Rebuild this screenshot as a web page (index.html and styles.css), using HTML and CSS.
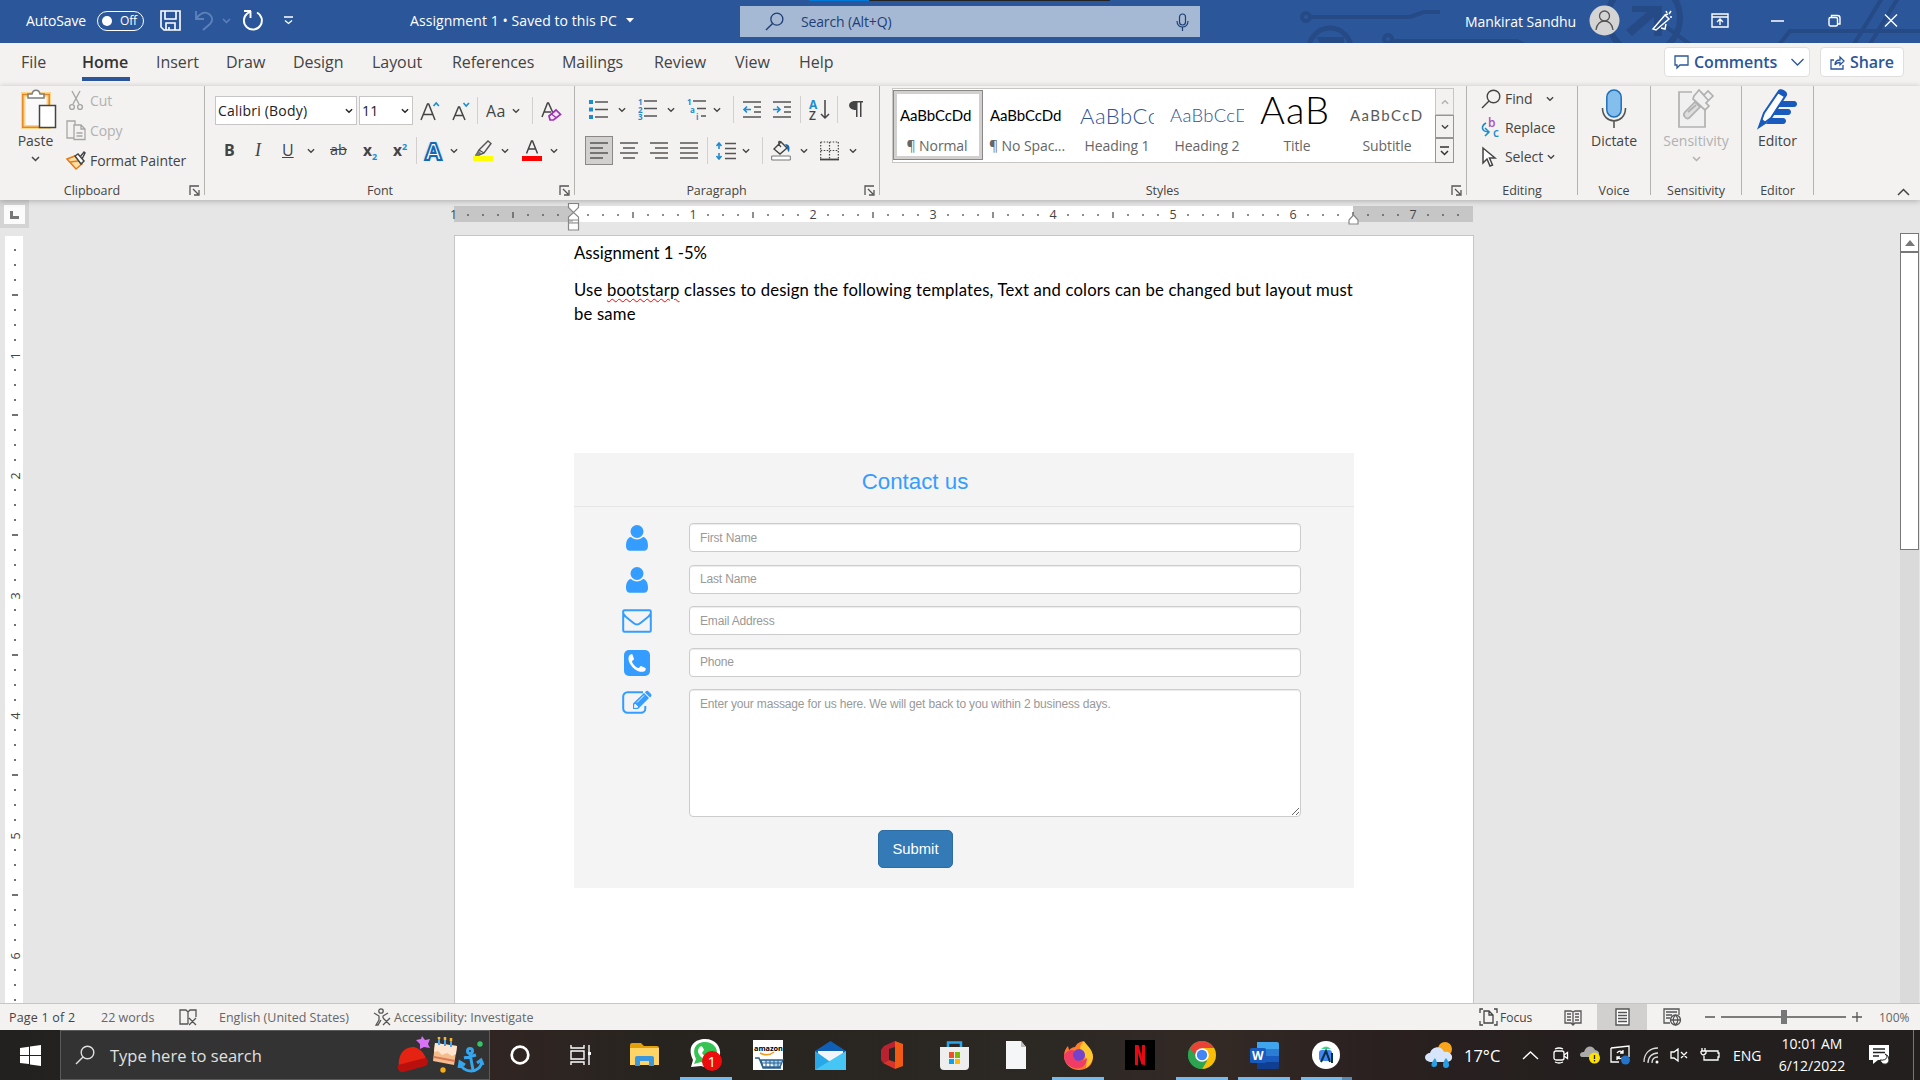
FILE: index.html
```html
<!DOCTYPE html>
<html lang="en">
<head>
    <meta charset="UTF-8">
    <meta name="viewport" content="width=device-width, initial-scale=1.0">
    <title>Assignment 1 - Word</title>
    <link rel="stylesheet" href="styles.css">
</head>
<body>
    <!-- shared icons -->
    <svg class="defs" width="0" height="0">
        <symbol id="chev" viewBox="0 0 9 6"><path d="M1 1l3.500 3.500L8 1" fill="none" stroke="currentColor" stroke-width="1.500"/></symbol>
        <symbol id="launch" viewBox="0 0 11 11"><path d="M1 10V1h9M4 4l5 5M10 5v5H5" fill="none" stroke="#555" stroke-width="1.300"/></symbol>
        <symbol id="glass" viewBox="0 0 20 20"><circle cx="12.500" cy="7.500" r="6.300" fill="none" stroke="currentColor" stroke-width="1.400"/><path d="M8 12L1 19" stroke="currentColor" stroke-width="1.500"/></symbol>
        <symbol id="user" viewBox="0 0 22 26"><circle cx="11" cy="6.500" r="6.500"/><path d="M5 12c1.500 1.500 3.500 2.400 6 2.400S15.500 13.500 17 12c3.500.5 5 4.500 5 9 0 3-1.500 4.800-4 4.800H4c-2.500 0-4-1.800-4-4.800 0-4.500 1.500-8.500 5-9z"/></symbol>
    </svg>

    <header class="titlebar">
        <svg class="circuit" width="660" height="43" fill="none" stroke="#254a85" stroke-width="4">
            <circle cx="46" cy="17" r="4"/><path d="M50 17h100l14-5h16M132 41h125l8 4M405 26l30 22M518 46l12-15h130M594 44l28-46M610 44l28-46"/>
            <circle cx="70" cy="49" r="21" stroke-width="5"/><path d="M62 43h20v-4H60z" fill="#254a85"/>
            <circle cx="128" cy="39" r="4"/><circle cx="384" cy="18" r="36" stroke-width="6"/>
            <path d="M372 6h30v30h-8V17l-22 19-6-6 21-18h-15z" fill="#254a85" stroke="none"/>
        </svg>
        <span>AutoSave</span>
        <span class="toggle"><i></i>Off</span>
        <svg width="21" height="21" fill="none" stroke="#fff" stroke-width="1.600"><path d="M1 1h19v19H4l-3-3zM5 1v8h11V1M6 20v-7h9v7M9 20v-3"/></svg>
        <svg width="19" height="21" fill="none" stroke="#5d82bb" stroke-width="1.800"><path d="M1 1v8h8M1 9c4-6 9-8 13-5s4 7 1 10l-7 6"/></svg>
        <svg class="dim" width="9" height="6"><use href="#chev"/></svg>
        <svg width="22" height="21" fill="none" stroke="#fff" stroke-width="1.900"><path d="M9 1H2v0M8.500 1v7M15 2.500a9 9 0 1 1-10 1.200L8 1.500"/></svg>
        <svg width="9" height="9" fill="none" stroke="#fff" stroke-width="1.300"><path d="M0 1h9M1 4.500l3.500 3 3.500-3"/></svg>
        <span class="doc-title">Assignment 1 • Saved to this PC</span>
        <svg width="8" height="5" fill="#fff"><path d="M0 0h8L4 4.500z"/></svg>
        <div class="search">
            <svg width="19" height="19"><use href="#glass"/></svg>
            <span>Search (Alt+Q)</span>
            <svg width="13" height="18" fill="none" stroke="#1e3f75" stroke-width="1.200"><rect x="3.500" y="1" width="6" height="11" rx="3"/><path d="M1 8c0 8 11 8 11 0M6.500 14v4"/></svg>
        </div>
        <span class="account">Mankirat Sandhu</span>
        <svg width="31" height="31"><circle cx="15.500" cy="15.500" r="15" fill="#d4d4d4"/><g fill="none" stroke="#555" stroke-width="1.300"><circle cx="15.500" cy="11" r="5"/><path d="M7 25c1-12 16-12 17 0"/></g></svg>
        <svg width="21" height="22" fill="none" stroke="#fff" stroke-width="1.500"><path d="M1 19L13 5l4 4L4 20zM13 5l3-1M9 18l4 1 1-5M14 1l1 2M19 1l-2 3M20 7h-2"/></svg>
        <svg width="18" height="15" fill="none" stroke="#fff" stroke-width="1.400"><path d="M1 1h16v13H1zM1 4h16M9 12V6M6 9l3-3 3 3"/></svg>
        <svg width="13" height="2"><path d="M0 1h13" stroke="#fff" stroke-width="1.500"/></svg>
        <svg width="13" height="13" fill="none" stroke="#fff" stroke-width="1.400"><rect x="1" y="3.500" width="8.500" height="8.500" rx="1.500"/><path d="M3.500 3V1.500h6c2 0 2.500 1 2.500 2.500v6h-2"/></svg>
        <svg width="14" height="13" fill="none" stroke="#fff" stroke-width="1.400"><path d="M1 .5l12 12M13 .5l-12 12"/></svg>
        <div class="top-strip"></div>
    </header>

    <nav class="tabs">
        <span>File</span><span class="active">Home</span><span>Insert</span><span>Draw</span><span>Design</span><span>Layout</span><span>References</span><span>Mailings</span><span>Review</span><span>View</span><span>Help</span>
        <div class="pill comments"><svg width="15" height="14" fill="none" stroke="#2b579a" stroke-width="1.300"><path d="M1 1h13v9H6l-3 3v-3H1z"/></svg>Comments<svg class="pill-chev" width="13" height="8" fill="none" stroke="#2b579a" stroke-width="1.300"><path d="M.5 1l6 6 6-6"/></svg></div>
        <div class="pill"><svg width="15" height="15" fill="none" stroke="#2b579a" stroke-width="1.300"><path d="M4 5H1v9h12v-4M5 10c0-4 2-5 5-5V2l4 4-4 4V7.500c-3 0-4 .5-5 2.500z"/></svg>Share</div>
    </nav>

    <section class="ribbon">
        <div class="group clipboard">
            <div class="group-body">
                <div class="big-btn paste">
                    <svg width="35" height="40" fill="none"><path d="M2 6h24v31H2z" fill="#fafafa" stroke="#fbd78b" stroke-width="6"/><path d="M.8 5.500h26.400v32.700H.8z" stroke="#e58527" stroke-width="1.500"/><path d="M3.500 8h21v28h-21z" fill="#fafafa"/><path d="M6 9V5h4c1-5 7-5 8 0h4v4z" fill="#fff" stroke="#7d7d7d" stroke-width="1.500"/><path d="M17.500 16.500h16v22h-16z" fill="#fff" stroke="#444" stroke-width="1.500"/></svg>
                    <span>Paste</span>
                    <svg width="9" height="6"><use href="#chev"/></svg>
                </div>
                <div class="small-btns">
                    <div class="off"><svg width="20" height="20" fill="none" stroke="#a6a6a6" stroke-width="1.400"><path d="M6 1l7 13M14 1L7 14"/><circle cx="6" cy="17" r="2.400"/><circle cx="14" cy="17" r="2.400"/></svg>Cut</div>
                    <div class="off"><svg width="20" height="20" fill="#f3f2f1" stroke="#a6a6a6" stroke-width="1.300"><path d="M1 1h8v17H1z"/><path d="M8 5h7l4 4v10.500H8zM15 5v4h4M10.500 13h6M10.500 16h6"/></svg>Copy</div>
                    <div><svg width="20" height="20" fill="none" stroke="#e57a17" stroke-width="1.500"><path d="M1 9l8-3 7 8-6 5zM4 12l8-1" fill="#ffe0a3"/><path d="M9 6l3-2 6 7-3 3zM14 7l4-5 1 1-3 6" stroke="#444" fill="#fff"/></svg>Format Painter</div>
                </div>
            </div>
            <div class="group-label"><span>Clipboard</span></div>
            <svg class="launcher" width="11" height="11"><use href="#launch"/></svg>
        </div>

        <div class="group font">
            <div class="group-body">
                <div class="tool-row font-top">
                    <div class="combo">Calibri (Body)<svg width="8" height="6"><use href="#chev"/></svg></div>
                    <div class="combo">11<svg width="8" height="6"><use href="#chev"/></svg></div>
                    <svg width="22" height="22"><path d="M1 20L7.500 4h1.200L15 20M3.500 14.500h9" fill="none" stroke="#444" stroke-width="1.500"/><path d="M13.500 6l2.700-3 2.700 3" fill="none" stroke="#1e8bcd" stroke-width="1.600"/></svg>
                    <svg width="20" height="22"><path d="M1 20L6.500 7h1L13 20M3 15.500h8" fill="none" stroke="#444" stroke-width="1.500"/><path d="M11.500 3l2.700 3L17 3" fill="none" stroke="#1e8bcd" stroke-width="1.600"/></svg>
                    <i class="sep"></i>
                    <span class="case">Aa</span>
                    <svg width="8" height="6"><use href="#chev"/></svg>
                    <i class="sep"></i>
                    <svg width="22" height="22" fill="none"><path d="M1 17L6.500 3h1L12 13M3 12h7" stroke="#444" stroke-width="1.500"/><path d="M8 16l7-6 4.500 4.500-7 5.500H9z" fill="#f7e6fa" stroke="#a033b3" stroke-width="1.700"/><path d="M10.500 14l5 4" stroke="#a033b3" stroke-width="1.500"/></svg>
                </div>
                <div class="tool-row font-bottom">
                    <b class="letter">B</b>
                    <em class="letter serif">I</em>
                    <u class="letter">U</u>
                    <svg width="8" height="6"><use href="#chev"/></svg>
                    <s class="letter strike">ab</s>
                    <span class="letter script">x<sub>2</sub></span>
                    <span class="letter script">x<sup>2</sup></span>
                    <i class="sep"></i>
                    <span class="effect">A</span>
                    <svg width="8" height="6"><use href="#chev"/></svg>
                    <svg width="20" height="22" fill="none"><path d="M0 16h20v5H0z" fill="#ff0"/><path d="M3 15l3-5 9-9 3 2.500-7 9.500-5 2zM6 10l5 3" stroke="#555" stroke-width="1.400"/><path d="M2 15l4-4 3 3z" fill="#777"/></svg>
                    <svg width="8" height="6"><use href="#chev"/></svg>
                    <svg width="20" height="22"><path d="M0 16h20v5H0z" fill="#f00"/><path d="M4.500 13.500L9.500 1h1l5 12.500M6.500 9h7" fill="none" stroke="#444" stroke-width="1.500"/></svg>
                    <svg width="8" height="6"><use href="#chev"/></svg>
                </div>
            </div>
            <div class="group-label"><span>Font</span></div>
            <svg class="launcher" width="11" height="11"><use href="#launch"/></svg>
        </div>

        <div class="group paragraph">
            <div class="group-body">
                <div class="tool-row para-top">
                    <svg width="19" height="20"><path d="M0 0h4v4H0zM0 7.500h4v4H0zM0 15h4v4H0z" fill="#1e8bcd"/><path d="M6 2h13M6 9.500h13M6 17h13" stroke="#555" stroke-width="1.500"/></svg>
                    <svg width="8" height="6"><use href="#chev"/></svg>
                    <svg width="19" height="21"><text class="num" x="0" y="6">1</text><text class="num" x="0" y="13.500">2</text><text class="num" x="0" y="21">3</text><path d="M6 2h13M6 9.500h13M6 17h13" stroke="#555" stroke-width="1.500"/></svg>
                    <svg width="8" height="6"><use href="#chev"/></svg>
                    <svg width="19" height="21"><text class="num" x="0" y="6">1</text><text class="num" x="3" y="13.500">a</text><text class="num" x="9" y="21">i</text><path d="M6 2h13M10 9.500h9M14 17h5" stroke="#555" stroke-width="1.500"/></svg>
                    <svg width="8" height="6"><use href="#chev"/></svg>
                    <i class="sep"></i>
                    <svg width="18" height="20"><path d="M0 2h18M11 7h7M11 12h7M0 17h18" stroke="#555" stroke-width="1.500"/><path d="M8 9.500H1M4 6.500l-3 3 3 3" fill="none" stroke="#1e8bcd" stroke-width="1.600"/></svg>
                    <svg width="18" height="20"><path d="M0 2h18M11 7h7M11 12h7M0 17h18" stroke="#555" stroke-width="1.500"/><path d="M0 9.500h7M4 6.500l3 3-3 3" fill="none" stroke="#1e8bcd" stroke-width="1.600"/></svg>
                    <i class="sep"></i>
                    <svg width="21" height="22"><text class="sort-a" x="0" y="10">A</text><text class="sort-z" x="0" y="21">Z</text><path d="M16 1v18M12 15l4 4 4-4" fill="none" stroke="#444" stroke-width="1.500"/></svg>
                    <i class="sep"></i>
                    <svg width="14" height="17"><path d="M6 0h8v1.500h-1.500V16H11V1.500H8.500V16H7V9C-2 9-2 0 6 0z" fill="#444"/></svg>
                </div>
                <div class="tool-row para-bottom">
                    <div class="pressed"><svg width="18" height="17"><path d="M0 1h18M0 6h13M0 11h18M0 16h13" stroke="#555" stroke-width="1.500"/></svg></div>
                    <svg width="18" height="17"><path d="M0 1h18M3 6h12M0 11h18M3 16h12" stroke="#555" stroke-width="1.500"/></svg>
                    <svg width="18" height="17"><path d="M0 1h18M5 6h13M0 11h18M5 16h13" stroke="#555" stroke-width="1.500"/></svg>
                    <svg width="18" height="17"><path d="M0 1h18M0 6h18M0 11h18M0 16h18" stroke="#555" stroke-width="1.500"/></svg>
                    <i class="sep"></i>
                    <svg width="20" height="18"><path d="M9 1.500h11M9 6.500h11M9 11.500h11M9 16.500h11" stroke="#555" stroke-width="1.500"/><path d="M3 1v6M.5 4L3 1l2.500 3M3 11v6M.5 14L3 17l2.500-3" fill="none" stroke="#1e8bcd" stroke-width="1.600"/></svg>
                    <svg width="8" height="6"><use href="#chev"/></svg>
                    <i class="sep"></i>
                    <svg width="20" height="22" fill="none"><path d="M.7 16h18.600v4H.7z" fill="#fff" stroke="#777"/><path d="M3 9l7-7 6 6-7 6zM10 2c-3-2-3 2 0 5" stroke="#444" stroke-width="1.400"/><path d="M14 4c5 0 5 4 4 8-2-1-1-4-4-8z" fill="#1468b3"/></svg>
                    <svg width="8" height="6"><use href="#chev"/></svg>
                    <svg width="19" height="20" fill="none"><path d="M.7 1h17.600M.7 9.500h17.600M.7 1v17M9.500 1v17M18.300 1v17" stroke="#444" stroke-width="1.200" stroke-dasharray="1.500 1.500"/><path d="M0 18.500h19" stroke="#444" stroke-width="1.800"/></svg>
                    <svg width="8" height="6"><use href="#chev"/></svg>
                </div>
            </div>
            <div class="group-label"><span>Paragraph</span></div>
            <svg class="launcher" width="11" height="11"><use href="#launch"/></svg>
        </div>

        <div class="group styles">
            <div class="group-body">
                <div class="gallery">
                    <div class="style-item chosen"><p class="normal">AaBbCcDd</p><small>¶ Normal</small></div>
                    <div class="style-item"><p class="normal">AaBbCcDd</p><small>¶ No Spac...</small></div>
                    <div class="style-item"><p class="heading1">AaBbCc</p><small>Heading 1</small></div>
                    <div class="style-item"><p class="heading2">AaBbCcD</p><small>Heading 2</small></div>
                    <div class="style-item"><p class="title">AaB</p><small>Title</small></div>
                    <div class="style-item"><p class="subtitle">AaBbCcD</p><small>Subtitle</small></div>
                    <div class="gallery-scroll">
                        <span class="disabled"><svg class="flip" width="8" height="6"><use href="#chev"/></svg></span>
                        <span><svg width="8" height="6"><use href="#chev"/></svg></span>
                        <span><svg width="9" height="10" fill="none" stroke="#333" stroke-width="1.500"><path d="M0 1h9M1 5l3.500 3.500L8 5"/></svg></span>
                    </div>
                </div>
            </div>
            <div class="group-label"><span>Styles</span></div>
            <svg class="launcher" width="11" height="11"><use href="#launch"/></svg>
        </div>

        <div class="group editing">
            <div class="group-body edit-list">
                <div><svg width="20" height="20"><use href="#glass"/></svg>Find<svg class="gap" width="8" height="6"><use href="#chev"/></svg></div>
                <div><svg width="20" height="22" fill="none"><text class="rep-b" x="7" y="10">b</text><text class="rep-c" x="12" y="20">c</text><path d="M5 6C0 9 0 14 7 15M4 11l4 4-4 4" stroke="#1e8bcd" stroke-width="1.600"/></svg>Replace</div>
                <div><svg width="20" height="20" fill="#fff" stroke="#444" stroke-width="1.500"><path d="M2 1v15l4-4 3 7 2.500-1-3-7H14z"/></svg>Select<svg width="8" height="6"><use href="#chev"/></svg></div>
            </div>
            <div class="group-label"><span>Editing</span></div>
        </div>

        <div class="group voice">
            <div class="group-body big-btn">
                <svg width="26" height="40" fill="none"><rect x="5.800" y="1" width="14.400" height="27" rx="7.200" fill="#83beec" stroke="#1e6fba" stroke-width="1.500"/><path d="M1.500 19c0 17 23 17 23 0M13 32v7" stroke="#555" stroke-width="1.600"/></svg>
                <span>Dictate</span>
            </div>
            <div class="group-label"><span>Voice</span></div>
        </div>

        <div class="group sensitivity">
            <div class="group-body big-btn off">
                <svg width="36" height="40" fill="none" stroke="#b1b1b1" stroke-width="1.700"><path d="M14 3H1v35h26V18" fill="#f0f0f0"/><path d="M7 23l10-10 5 5-11 11c-3 2-7-3-4-6zM10 23l8-7" fill="#ddd"/><path d="M16 7l5-6 5 5 4-4 5 5-7 7 3 3-4 4L15 10zM21 1l9 10" fill="#f0f0f0"/></svg>
                <span>Sensitivity</span>
                <svg width="9" height="6"><use href="#chev"/></svg>
            </div>
            <div class="group-label"><span>Sensitivity</span></div>
        </div>

        <div class="group editor">
            <div class="group-body big-btn">
                <svg width="40" height="40" fill="#185abd"><path d="M19 12h17c4 0 4 6 0 6H18zM15 20h15c4 0 4 6 0 6H13zM12 29h13c4 0 4 6 0 6H8z"/><path d="M1 38l5-14L21 2c2-2 8 1 7 4L13 29z" fill="#fff" stroke="#185abd" stroke-width="2"/><path d="M21 1c3-1 8 2 7 5l-2 2-7-4zM1 39l3-9 5 4z"/></svg>
                <span>Editor</span>
            </div>
            <div class="group-label"><span>Editor</span></div>
        </div>
        <svg class="collapse" width="13" height="8" fill="none" stroke="#444" stroke-width="1.500"><path d="M1 7l5.500-5.500L12 7"/></svg>
    </section>

    <main class="workspace">
        <aside class="left-rail">
            <div class="tab-stop"><svg width="10" height="8"><path d="M0 0h3v5h6v3H0z" fill="#777"/></svg></div>
            <svg class="v-ruler" width="18" height="768">
                <defs><pattern id="vt" y="-1" width="18" height="120" patternUnits="userSpaceOnUse"><path d="M9 15h2M9 30h2M9 45h2M7 60h6M9 75h2M9 90h2M9 105h2" stroke="#444" stroke-width="1.300"/></pattern></defs>
                <rect width="18" height="768" fill="#fff"/><rect width="18" height="768" fill="url(#vt)"/>
                <text transform="translate(14.500 120) rotate(-90)">1</text><text transform="translate(14.500 240) rotate(-90)">2</text><text transform="translate(14.500 360) rotate(-90)">3</text><text transform="translate(14.500 480) rotate(-90)">4</text><text transform="translate(14.500 600) rotate(-90)">5</text><text transform="translate(14.500 720) rotate(-90)">6</text>
            </svg>
        </aside>

        <div class="page-column">
            <svg class="h-ruler" width="1030" height="30">
                <defs><pattern id="ht" x="3" width="120" height="16" patternUnits="userSpaceOnUse"><path d="M15 8v2M30 8v2M45 8v2M60 6v6M75 8v2M90 8v2M105 8v2" stroke="#444" stroke-width="1.200"/></pattern></defs>
                <rect x="4" width="1019" height="16" fill="#c6c6c6"/><rect x="123" width="780" height="16" fill="#fff"/><rect x="4" width="1017" height="16" fill="url(#ht)"/>
                <text x="3.500" y="13">1</text><text x="243" y="13">1</text><text x="363" y="13">2</text><text x="483" y="13">3</text><text x="603" y="13">4</text><text x="723" y="13">5</text><text x="843" y="13">6</text><text x="963" y="13">7</text>
                <g transform="translate(0 -3)" fill="#fff" stroke="#888" stroke-width="1.200"><path d="M118.500.5h10v4l-5 5-5-5zM118.500 17v-3l5-4.500 5 4.500v3zM118.500 20h10v7h-10zM118.500 17v4M128.500 17v4M899 21v-4l4.500-5 4.500 5v4z"/></g>
            </svg>
            <article class="page">
                <p class="line">Assignment 1 -5%</p>
                <p class="line second">Use <span class="typo">bootstarp</span> classes to design the following templates, Text and colors can be changed but layout must<br>be same</p>

                <form class="contact">
                    <h2>Contact us</h2>
                    <div class="field">
                        <svg width="22" height="26"><use href="#user"/></svg>
                        <input type="text" placeholder="First Name">
                    </div>
                    <div class="field">
                        <svg width="22" height="26"><use href="#user"/></svg>
                        <input type="text" placeholder="Last Name">
                    </div>
                    <div class="field">
                        <svg width="30" height="24"><path d="M2.500 1.200h25a1.300 1.300 0 0 1 1.300 1.300v19a1.300 1.300 0 0 1-1.300 1.300h-25a1.300 1.300 0 0 1-1.300-1.300v-19a1.300 1.300 0 0 1 1.300-1.300zM1.500 5c1 2 3 3.500 5 5l5 4c2.500 2.200 4.500 2.200 7 0l5-4c2-1.500 4-3 5-5" fill="none" stroke="#349dff" stroke-width="2"/></svg>
                        <input type="text" placeholder="Email Address">
                    </div>
                    <div class="field">
                        <svg width="26" height="26"><rect width="26" height="26" rx="5"/><path d="M5 6c1-2 3-2 3.500-1.500L10 9c0 1-2 1.500-2 2.500.5 2.500 4 6 6.500 6.500 1 0 1.500-2 2.500-2l4.500 2c.5 1 0 3-1.500 3.500C13 24 2 13 5 6z" fill="#fff"/></svg>
                        <input type="text" placeholder="Phone">
                    </div>
                    <div class="field message">
                        <svg width="30" height="25"><path d="M21 2.200H5.500a4.300 4.300 0 0 0-4.300 4.300v12a4.300 4.300 0 0 0 4.300 4.300h13.500a4.300 4.300 0 0 0 4.300-4.300V16" fill="none" stroke="#349dff" stroke-width="2"/><path d="M11 13.500L22 3l5 5-11 11h-5zM23.500 1.700c1-1.300 2.300-1.200 3.300 0l2 2c.9 1 .9 2 0 3L28 7.500l-5-5z"/><path d="M13 14l-.5 3.500L16 17zM15 12.500l7-7" fill="#f4f4f4" stroke="#f4f4f4"/></svg>
                        <textarea placeholder="Enter your massage for us here. We will get back to you within 2 business days."></textarea>
                    </div>
                    <button type="button">Submit</button>
                </form>
            </article>
        </div>

        <div class="scrollbar">
            <span class="arrow"><svg width="10" height="6"><path d="M5 0l5 6H0z" fill="#777"/></svg></span>
            <span class="thumb"></span>
            <span class="arrow down"><svg width="10" height="6"><path d="M5 6l5-6H0z" fill="#777"/></svg></span>
        </div>
    </main>

    <footer class="statusbar">
        <span>Page 1 of 2</span>
        <span class="soft">22 words</span>
        <svg width="19" height="17" fill="none" stroke="#555" stroke-width="1.300"><path d="M9 15H1V1h6l2 2v12M9 3l2-2h6v7M10 9l7 7M17 9l-7 7"/></svg>
        <span class="soft">English (United States)</span>
        <svg width="19" height="18" fill="none" stroke="#555" stroke-width="1.300"><circle cx="8" cy="3" r="2.200"/><path d="M1 5l5 3v4l-3 5h2l3-5M15 5l-5 3v2M10 10l7 7M17 10l-7 7"/></svg>
        <span class="soft">Accessibility: Investigate</span>
        <svg width="19" height="18" fill="none" stroke="#444" stroke-width="1.300"><path d="M1 5V1h3M1 13v4h3M15 1h3v4M18 13v4h-3M5 3h5l4 4v8H5zM10 3v4h4"/></svg>
        <span class="focus-label">Focus</span>
        <svg width="18" height="17" fill="none" stroke="#555" stroke-width="1.300"><path d="M1 2h6l2 1 2-1h6v12h-6l-2 2-2-2H1zM9 3v13M3 5h4M3 8h4M3 11h4M11 5h4M11 8h4M11 11h4"/></svg>
        <div class="view-on"><svg width="15" height="18" fill="#fff" stroke="#555" stroke-width="1.400"><path d="M1 1h13v16H1zM3 4.500h9M3 7.500h9M3 10.500h9M3 13.500h9"/></svg></div>
        <svg width="19" height="18" fill="none" stroke="#555" stroke-width="1.300"><path d="M7 15H1V1h15v6M3 4h11M3 7h6M3 10h4"/><circle cx="12.500" cy="12" r="5"/><path d="M7.500 12h10M12.500 7c-3 3-3 7 0 10M12.500 7c3 3 3 7 0 10"/></svg>
        <svg width="160" height="16" stroke="#555" stroke-width="1.300"><path d="M0 8h10M16 8h125M147 8h10M152 3v10"/><path d="M76 1h6v14h-6z" fill="#777" stroke="none"/></svg>
        <span class="soft zoom-level">100%</span>
    </footer>

    <div class="taskbar">
        <svg class="start" width="21" height="21" fill="#fff"><path d="M0 3l9-1.300V10H0zM10 1.500L21 0v10H10zM0 11h9v8L0 18zM10 11h11v10l-11-1.500z"/></svg>
        <div class="task-search">
            <svg width="20" height="20"><use href="#glass"/></svg>
            <span>Type here to search</span>
            <svg class="treats" width="86" height="38">
                <path d="M24 0l3 4 5-1-2 5 2 4-6-1-4 2v-5l-4-4 5-1z" fill="#d873f5"/><path d="M1 30C0 16 8 11 16 11c8 2 13 9 13 18L4 36c-3 0-4-4-3-6z" fill="#e52313"/><path d="M0 29l27-7c4 0 4 7 0 8L5 36c-5 1-6-5-5-7z" fill="#b90f0d"/>
                <path d="M37 7l22 3-3 19-21-4z" fill="#f5bd8b"/><path d="M37 7l22 3-1 8-4 2-5-3-5 2-4-4-4 1z" fill="#ffe4d0"/><path d="M41 9V3M47 10V4M53 11V5" stroke="#4aa6e8" stroke-width="2"/><path d="M41 1v2M47 1v3M53 2v3" stroke="#ffb52b" stroke-width="2.500"/><path d="M36 21l21 4" stroke="#d97957" stroke-width="2"/>
                <g fill="none" stroke="#35a5ed" stroke-width="3"><circle cx="72" cy="15" r="2.500"/><path d="M72 18l3 16M66 22l12-3M62 27c2 10 20 12 22-2M61 32l1-6 5 3M85 29l-2-5-4 3"/></g><circle cx="82" cy="8" r="2.700" fill="#34c768"/><circle cx="45" cy="34" r="2.700" fill="#f9ad14"/>
            </svg>
        </div>
        <div class="apps">
            <div class="app narrow"><svg width="20" height="20"><circle cx="10" cy="10" r="8.300" fill="none" stroke="#fff" stroke-width="2.700"/></svg></div>
            <div class="app"><svg width="21" height="20" fill="none" stroke="#fff" stroke-width="1.400"><path d="M1 0v3h13V0M1 6h13v8H1zM1 20v-3h13v3M19 0v20"/><path d="M18 7h3v3h-3z" fill="#fff" stroke="none"/></svg></div>
            <div class="app"><svg width="29" height="24"><path d="M0 2q0-2 2-2h9l3 3h13q2 0 2 2v16H0z" fill="#e3a008"/><path d="M0 5h29v17H0z" fill="#ffd467"/><path d="M5 23v-8q0-2 2-2h15q2 0 2 2v8h-5v-5h-9v5z" fill="#3a96dd"/></svg></div>
            <div class="app open"><svg class="whatsapp" width="34" height="34"><path d="M2 29l2-7C-3 7 7 1 16 1c11 0 16 8 15 16-1 9-10 14-19 11z" fill="#fff"/><path d="M5 26l2-5C2 10 8 4 16 4c8 0 13 6 12 13-1 7-9 11-16 7z" fill="#35c453"/><path d="M10 10c3-4 4 0 5 2l-2 3c2 3 4 4 6 4l3-2c3 2 2 4-1 5-6 2-15-7-11-12z" fill="#fff"/><circle cx="23" cy="23" r="10" fill="#ed0b0b"/><text class="badge" x="18.500" y="29">1</text></svg></div>
            <div class="app"><svg width="30" height="30"><path d="M0 0h30v30H0z" fill="#fff"/><text class="amazon" x="1" y="11">amazon</text><path d="M7 13q8 4 14-1" fill="none" stroke="#f19a1c" stroke-width="1.500"/><path d="M2 18h4l4 10h18M8 20h22l-3 7H10z" fill="#a7d2ea" stroke="#2c6291" stroke-width="1.300"/><path d="M9 23h19M13 20v7M17 20v7M21 20v7M25 20v7" stroke="#2c6291"/></svg></div>
            <div class="app"><svg width="31" height="29"><path d="M0 10L15.500 0 31 10v19H0z" fill="#0f5fb4"/><path d="M3 10h25v12H3z" fill="#f1f5fa"/><path d="M0 10l15.500 11L31 10v19H0z" fill="#29a8e8"/><path d="M0 29L31 10v19z" fill="#46c6f5"/></svg></div>
            <div class="app"><svg width="23" height="28"><path d="M3 5L14 0v6L8 8v11l-6 3-2-3V9z" fill="#b8232f"/><path d="M14 0l8 3v22l-8 3z" fill="#f05a14"/><path d="M2 22l6-3 6 2v7z" fill="#d9342b"/></svg></div>
            <div class="app"><svg width="29" height="29"><path d="M8 7V1.500h13V7" fill="none" stroke="#2aa6ec" stroke-width="2.500"/><path d="M0 6h29v19q0 4-4 4H4q-4 0-4-4z" fill="#eee"/><path d="M9 11h5v6H9z" fill="#f25022"/><path d="M15 11h5v6h-5z" fill="#7fba00"/><path d="M9 18h5v5H9z" fill="#00a4ef"/><path d="M15 18h5v5h-5z" fill="#ffb900"/></svg></div>
            <div class="app"><svg width="20" height="28"><path d="M0 0h15l5 6v22H0z" fill="#f5f6f7"/><path d="M15 0v6h5z" fill="#bbb"/></svg></div>
            <div class="app open"><svg width="29" height="29"><path d="M19 0c2 3 9 8 10 16 0 8-6 13-14 13S0 23 0 15c0-5 2-8 4-10l1 4c2-2 4-3 6-3 2-4 5-5 8-6z" fill="#ff7b29"/><path d="M20 0c2 4 9 8 9 16-1 6-4 9-7 11 2-10-3-16-6-19 0-4 2-6 4-8z" fill="#ffc72e"/><path d="M0 14c4-6 9-6 12-3l-2 4c3 7 10 5 13 2 0 8-7 12-13 10C4 25 0 21 0 14z" fill="#f13c66"/><circle cx="15" cy="14" r="6" fill="#7543cb"/></svg></div>
            <div class="app"><svg width="30" height="30"><path d="M0 0h30v30H0z"/><path d="M10 5h3.500l3.500 12V5h3v20l-3.500-.5L13 13v12h-3z" fill="#e50914"/></svg></div>
            <div class="app open"><svg width="28" height="28"><circle cx="14" cy="14" r="14" fill="#2da44f"/><path d="M14 14L1.900 7A14 14 0 0 1 26.100 7z" fill="#e94335"/><path d="M14 7h12.100A14 14 0 0 1 14 28l6-11z" fill="#fbbc05"/><path d="M2 7l7 12 5-12z" fill="#e94335"/><path d="M2 7a14 14 0 0 0 12 21l5-8-9-2z" fill="#2da44f"/><circle cx="14" cy="14" r="6.800" fill="#fff"/><circle cx="14" cy="14" r="5.200" fill="#4285f4"/></svg></div>
            <div class="app open"><svg width="29" height="27"><path d="M7 0h20q2 0 2 2v5H7z" fill="#41a5ee"/><path d="M7 7h22v7H7z" fill="#2b7cd3"/><path d="M7 14h22v6H7z" fill="#185abd"/><path d="M7 20h22v5q0 2-2 2H7z" fill="#103f91"/><rect y="6" width="16" height="15" rx="1.500" fill="#185abd"/><text class="word-w" x="2" y="18">W</text></svg></div>
            <div class="app open multi"><svg width="28" height="28"><circle cx="14" cy="14" r="14" fill="#fff"/><path d="M9 8q5-5 10 0z" fill="#3ddc84"/><rect x="7" y="9" width="13" height="11" rx="3" fill="#4285f4"/><path d="M9 21l5-11 4 11M20 12v10" fill="none" stroke="#073042" stroke-width="2"/></svg></div>
        </div>
        <div class="tray">
            <svg width="29" height="27"><circle cx="20" cy="7" r="7" fill="#f8a51b"/><path d="M5 20c-8-2-5-9 0-9 2-7 12-8 14-1 8-2 12 9 3 10z" fill="#d6e5fa"/><path d="M10 16c-4 5-5 9-1 9s4-4 1-9zM21 16c-4 5-4 10 0 10s4-5 0-10z" fill="#279fe5"/></svg>
            <span class="temp">17°C</span>
            <svg width="17" height="9" fill="none" stroke="#fff" stroke-width="1.400"><path d="M1 8l7.500-7L16 8"/></svg>
            <svg width="16" height="17" fill="none" stroke="#fff" stroke-width="1.300"><rect x="1" y="4" width="10" height="9" rx="2"/><path d="M11 8l3.500-2.500v6L11 9M2 2q4-2 8 0M2 15q4 2 8 0"/></svg>
            <svg width="21" height="18"><path d="M3 11c-5 0-3-6 1-5 2-7 9-7 11-2 6 1 5 7 0 7z" fill="#aaa"/><circle cx="14.500" cy="12" r="5.500" fill="#ffe100"/><path d="M14.500 9v4M14.500 14v1.500" stroke="#222" stroke-width="1.300"/></svg>
            <svg width="21" height="20" fill="none" stroke="#fff" stroke-width="1.300"><path d="M1 3l18-2v11M1 3v14h8M7 8c2-3 5-2 6 0M13 5v3h-3M7 12c1 2 3 2 5 1M7 15v-3h3"/><circle cx="15.500" cy="15" r="4.500" fill="#2474cb" stroke="none"/></svg>
            <svg width="17" height="17" fill="none" stroke="#ddd" stroke-width="1.300"><path d="M1 15C1 6 7 1 15 1M5 16c0-6 4-10 10-10M9 16c0-4 2-6 6-6"/><circle cx="14" cy="15" r="1.500" fill="#fff" stroke="none"/></svg>
            <svg width="19" height="14" fill="none" stroke="#fff" stroke-width="1.300"><path d="M1 4h3l4-3v12l-4-3H1zM11 4l6 6M17 4l-6 6"/></svg>
            <svg width="21" height="14" fill="none" stroke="#fff" stroke-width="1.300"><path d="M6 3h12v2h1v4h-1v3H4V8M1 3h5M2 0v3M5 0v3M1 3v2q2 4 5 0V3"/></svg>
            <span>ENG</span>
            <div class="clock">10:01 AM<br>6/12/2022</div>
            <svg width="21" height="20"><path d="M0 0h20v15H9l-5 4v-4H0z" fill="#fff"/><path d="M4 4h12M4 7.500h12M4 11h6" stroke="#222" stroke-width="1.300"/><path d="M16 9c4 3 1 7-5 6 2 6 9 5 9 0q0-5-4-6z" fill="#fff" stroke="#222"/></svg>
            <i class="peek"></i>
        </div>
    </div>
</body>
</html>
```
FILE: styles.css
```css
* {
    box-sizing: border-box;
}
body {
    margin: 0;
    width: 1920px;
    height: 1080px;
    overflow: hidden;
    background: #e6e6e6;
    color: #444;
    font-family: "Open Sans", "Noto Sans", sans-serif;
    font-size: 14px;
    display: flex;
    flex-direction: column;
}
svg {
    display: block;
    flex: none;
    overflow: visible;
}
.defs {
    position: absolute;
}
p, h2 {
    margin: 0;
}

/* title bar */
.titlebar {
    position: relative;
    height: 43px;
    flex: none;
    background: #2b579a;
    color: #fff;
    display: grid;
    grid-template-columns: 71px 63px 35px 27px 20px 42px 126px 216px 114px 725px 124px 63px 59px 60px 57px 56px 30px;
    align-items: center;
    padding: 0 0 2px 26px;
    font-size: 14px;
    letter-spacing: -0.15px;
    white-space: nowrap;
}
.titlebar > * {
    position: relative;
}
.titlebar > .circuit {
    position: absolute;
    left: 1260px;
    top: 0;
    overflow: hidden;
}
.titlebar > .top-strip {
    position: absolute;
    left: 809px;
    top: 0;
    width: 301px;
    height: 1px;
    background: linear-gradient(90deg, #0078d7 60px, #222 60px);
}
.toggle {
    width: 47px;
    height: 20px;
    border: 1px solid #fff;
    border-radius: 10px;
    display: flex;
    align-items: center;
    gap: 8px;
    padding-left: 4px;
    font-size: 12px;
}
.toggle i {
    width: 10px;
    height: 10px;
    border-radius: 50%;
    background: #fff;
}
.dim {
    color: #5d82bb;
}
.doc-title {
    letter-spacing: 0.07px;
}
.search {
    width: 460px;
    height: 31px;
    margin-top: 2px;
    background: #a6b9d4;
    color: #1e3f75;
    display: grid;
    grid-template-columns: 36px 375px 13px;
    align-items: center;
    padding-left: 25px;
}
.account {
    padding-top: 1px;
    letter-spacing: -0.05px;
}

/* tabs */
.tabs {
    height: 43px;
    flex: none;
    background: #f3f2f1;
    display: grid;
    grid-template-columns: 61px 74px 70px 67px 79px 80px 110px 92px 81px 64px 865px 156px 84px;
    padding: 4px 0 7px 21px;
    font-size: 16px;
    letter-spacing: -0.05px;
    line-height: 30px;
}
.tabs .active {
    width: 48px;
    font-weight: 600;
    letter-spacing: 0;
    border-bottom: 4px solid #2b579a;
    color: #333;
}
.pill {
    height: 30px;
    background: #fff;
    border: 1px solid #e1dfdd;
    border-radius: 4px;
    color: #2b579a;
    font-weight: 600;
    letter-spacing: -0.1px;
    display: flex;
    align-items: center;
    gap: 5px;
    padding-left: 9px;
}
.comments {
    width: 146px;
}
.pill-chev {
    margin-left: 9px;
}

/* ribbon */
.ribbon {
    height: 114px;
    flex: none;
    background: #f3f2f1;
    display: flex;
    position: relative;
    z-index: 2;
    box-shadow: 0 1px 6px rgba(0, 0, 0, 0.25);
}
.group {
    position: relative;
    height: 109px;
    border-right: 1px solid #b5b3b1;
    display: flex;
    flex-direction: column;
    flex: none;
}
.group-body {
    height: 98px;
    flex: none;
}
.group-label {
    font-size: 12.500px;
    line-height: 13px;
    letter-spacing: -0.05px;
    text-align: center;
}
.launcher {
    position: absolute;
    right: 4px;
    bottom: -1px;
}
.clipboard { width: 205px; }
.clipboard .group-label { padding-right: 20px; }
.font { width: 370px; }
.font .group-label { padding-right: 19px; }
.paragraph { width: 305px; }
.paragraph .group-label { padding-right: 21px; }
.styles { width: 587px; }
.styles .group-label { padding-right: 21px; }
.editing { width: 111px; }
.voice { width: 73px; }
.sensitivity { width: 91px; }
.editor { width: 72px; }

.clipboard .group-body {
    display: grid;
    grid-template-columns: 66px 138px;
}
.big-btn {
    display: flex;
    flex-direction: column;
    align-items: center;
    padding-top: 3px;
}
.big-btn span {
    line-height: 20px;
    margin: 2px 0 5px;
}
.paste {
    padding: 3px 0 0 5px;
}
.paste svg:first-child {
    margin-left: 7px;
}
.off {
    color: #b1b1b1;
}
.small-btns {
    display: grid;
    grid-template-rows: repeat(3, 30px);
    margin-top: -1px;
    letter-spacing: -0.1px;
}
.small-btns div {
    display: flex;
    align-items: center;
    gap: 4px;
    white-space: nowrap;
}
.tool-row {
    height: 29px;
    display: grid;
    align-items: center;
}
.sep {
    width: 1px;
    height: 27px;
    background: #d2d0ce;
}
.font-top {
    margin-top: 10px;
    padding-left: 10px;
    grid-template-columns: 144px 61px 32px 25px 9px 26px 20px 9px 22px;
}
.font-bottom {
    margin-top: 11px;
    padding-left: 19px;
    grid-template-columns: 31px 27px 25px 21px 35px 30px 23px 9px 25px 23px 28px 21px 28px 10px;
}
.font-bottom .letter {
    margin-top: -2px;
}
.combo {
    width: 142px;
    height: 29px;
    background: #fff;
    border: 1px solid #c8c6c4;
    display: flex;
    align-items: center;
    justify-content: space-between;
    padding: 0 3px 0 2px;
    color: #222;
    letter-spacing: 0.2px;
}
.combo + .combo {
    width: 54px;
}
.case {
    font-size: 16px;
    letter-spacing: 0.5px;
}
.letter {
    font-size: 16px;
    line-height: 20px;
}
.serif {
    font-family: "Liberation Serif", serif;
    font-size: 18px;
}
.strike {
    font-size: 14.500px;
    padding-left: 2px;
}
.script {
    font-weight: 700;
    font-size: 15.500px;
    white-space: nowrap;
}
.script sub, .script sup {
    color: #1e8bcd;
    font-size: 9px;
    line-height: 0;
}
.effect {
    font-size: 24px;
    font-weight: 700;
    line-height: 22px;
    color: #fff;
    -webkit-text-stroke: 2px #1468b3;
    text-shadow: 0 0 3px #5ab1ee;
}
.para-top {
    margin-top: 9px;
    padding-left: 14px;
    grid-template-columns: 29px 20px 29px 20px 26px 20px 10px 30px 27px 9px 28px 12px 14px;
}
.para-bottom {
    margin-top: 12px;
    padding-left: 10px;
    grid-template-columns: 35px 30px 30px 27px 9px 26px 20px 9px 29px 20px 29px 8px;
}
.pressed {
    width: 28px;
    height: 29px;
    background: #d2d0ce;
    border: 1px solid #8a8886;
    display: grid;
    place-items: center;
}
.num {
    font-size: 8px;
    font-weight: 700;
    fill: #1e8bcd;
}
.sort-a {
    font-size: 12px;
    font-weight: 700;
    fill: #1e8bcd;
}
.sort-z {
    font-size: 12px;
    font-weight: 600;
    fill: #444;
}
.gallery {
    margin: 2px 0 0 12px;
    width: 562px;
    height: 75px;
    border: 1px solid #c8c6c4;
    background: #fff;
    display: flex;
}
.style-item {
    width: 90px;
    height: 70px;
    margin-top: 1px;
    padding: 0 9px 0 7px;
    display: flex;
    flex-direction: column;
    flex: none;
    white-space: nowrap;
    overflow: hidden;
}
.style-item p {
    height: 46px;
    line-height: 51px;
    overflow: hidden;
    font-family: Lato, sans-serif;
    font-size: 15px;
    color: #000;
}
.style-item small {
    font-size: 14px;
    line-height: 19px;
    letter-spacing: -0.1px;
    text-align: center;
    color: #666;
    margin: 0 -8px;
}
.style-item.chosen {
    padding: 0 5px 0 3px;
    border: 4px solid #d2d0ce;
    outline: 1px solid #8a8886;
    outline-offset: -1px;
}
.chosen p {
    height: 42px;
    line-height: 43px;
}
.style-item .normal {
    letter-spacing: -0.1px;
}
.style-item .heading1 {
    font-size: 22px;
    font-weight: 300;
    letter-spacing: 0.5px;
    color: #2f5496;
}
.style-item .heading2 {
    font-size: 18.500px;
    font-weight: 300;
    letter-spacing: 0.3px;
    color: #2f5496;
}
.style-item .title {
    font-size: 38px;
    font-weight: 300;
    line-height: 39px;
    letter-spacing: 1px;
}
.style-item .subtitle {
    color: #5a5a5a;
    letter-spacing: 1.400px;
}
.gallery-scroll {
    margin: -1px -1px -1px auto;
    width: 19px;
    display: grid;
    grid-template-rows: 27px 23px 25px;
}
.gallery-scroll span {
    border: 1px solid #979593;
    background: #f3f2f1;
    display: grid;
    place-items: center;
}
.gallery-scroll .disabled {
    color: #b1b1b1;
    border-color: #c8c6c4;
}
.flip {
    transform: rotate(180deg);
}
.edit-list {
    display: grid;
    grid-template-rows: repeat(3, 29px);
    margin-top: -2px;
    height: 100px;
    padding: 0 0 0 14px;
    letter-spacing: -0.1px;
}
.edit-list div {
    display: flex;
    align-items: center;
    gap: 4px;
}
.edit-list .gap {
    margin-left: 9px;
}
.rep-b {
    font-size: 12px;
    font-weight: 600;
    fill: #ae4fc0;
}
.rep-c {
    font-size: 12px;
    font-weight: 600;
    fill: #1e8bcd;
}
.collapse {
    margin: 102px 0 0 83px;
}

/* document area */
.workspace {
    height: 803px;
    flex: none;
    display: grid;
    grid-template-columns: 450px 1450px 20px;
    overflow: hidden;
}
.tab-stop {
    width: 29px;
    height: 28px;
    border: 4px solid #d4d4d4;
    border-top-width: 5px;
    background: #fbfbfb;
    display: grid;
    place-items: center;
}
.v-ruler {
    margin: 8px 0 0 5px;
}
.v-ruler text, .h-ruler text {
    font-size: 12.500px;
    fill: #444;
    text-anchor: middle;
}
.h-ruler {
    margin-top: 6px;
}
.page {
    margin: -1px 0 0 4px;
    width: 1020px;
    height: 800px;
    background: #fff;
    border: 1px solid #c6c6c6;
    padding: 5px 0 0 119px;
    color: #000;
}
.line {
    font-family: Lato, "Open Sans", sans-serif;
    font-size: 16.700px;
    line-height: 24px;
    letter-spacing: 0;
    white-space: nowrap;
}
.second {
    margin-top: 13px;
    letter-spacing: 0.18px;
}
.typo {
    text-decoration: underline wavy #f00 1px;
    text-underline-offset: 2px;
}

/* contact form */
.contact {
    margin-top: 127px;
    width: 780px;
    height: 435px;
    background: #f4f4f4;
    font-family: "Liberation Sans", Arial, sans-serif;
    fill: #349dff;
}
.contact h2 {
    height: 54px;
    padding: 0 98px 0 0;
    margin-bottom: 16px;
    border-bottom: 1px solid #e6e6e6;
    font-size: 22.300px;
    font-weight: 400;
    line-height: 57px;
    text-align: center;
    color: #349dff;
}
.field {
    height: 29px;
    margin-bottom: 12.500px;
    display: grid;
    grid-template-columns: 126px 613px;
    align-items: center;
}
.field svg {
    justify-self: center;
    margin-top: 1px;
}
.field input, .field textarea {
    width: 612px;
    height: 29px;
    margin-left: -11px;
    padding: 0 10px;
    border: 1px solid #ccc;
    border-radius: 4px;
    background: #fff;
    font-family: inherit;
    font-size: 12px;
    letter-spacing: -0.17px;
    box-shadow: inset 0 1px 1px rgba(0, 0, 0, 0.08);
}
.field ::placeholder {
    color: #999;
}
.message {
    height: 128px;
    align-items: start;
}
.message svg {
    margin-top: 1px;
}
.field textarea {
    height: 128px;
    padding: 7px 10px;
}
.contact button {
    display: block;
    margin: 0 0 0 304px;
    width: 75px;
    height: 38px;
    padding: 0;
    background: #337ab7;
    border: 1px solid #2e6da4;
    border-radius: 5px;
    color: #fff;
    font-family: inherit;
    font-size: 14.800px;
}

/* scrollbar */
.scrollbar {
    margin: 33px 1px 1px 0;
    background: #dadada;
    display: flex;
    flex-direction: column;
}
.arrow {
    height: 19px;
    border: 1px solid #777;
    background: #fff;
    display: grid;
    place-items: center;
}
.thumb {
    height: 298px;
    border: 1px solid #777;
    background: #fff;
}
.down {
    margin-top: auto;
}

/* status bar */
.statusbar {
    height: 27px;
    flex: none;
    background: #f3f2f1;
    border-top: 1px solid #c6c6c6;
    display: grid;
    grid-template-columns: 92px 78px 40px 154px 21px 1085px 21px 64px 33px 66px 42px 174px 40px;
    align-items: center;
    padding-left: 9px;
    font-size: 12.500px;
    white-space: nowrap;
}
.statusbar span:first-child {
    letter-spacing: 0.2px;
}
.statusbar .focus-label, .statusbar .zoom-level {
    font-size: 12px;
}
.soft {
    color: #666;
}
.view-on {
    width: 50px;
    height: 26px;
    background: #d2d0ce;
    display: grid;
    place-items: center;
}

/* taskbar */
.taskbar {
    height: 50px;
    flex: none;
    background: linear-gradient(90deg, #222120 0, #302522 500px, #272420 660px, #2c2824 1050px, #332925 1220px, #2a2020 1380px, #231f1e 1600px, #221f1e 100%);
    display: grid;
    grid-template-columns: 60px 430px 935px 495px;
    color: #fff;
    align-items: center;
}
.start {
    margin-left: 20px;
}
.task-search {
    height: 50px;
    background: #333;
    border: 1px solid #5a5a5a;
    display: grid;
    grid-template-columns: 35px 288px 86px;
    align-items: center;
    padding-left: 14px;
    font-size: 16.500px;
    color: #e0e0e0;
    white-space: nowrap;
}
.apps {
    display: flex;
    height: 50px;
}
.app {
    width: 62px;
    height: 50px;
    display: grid;
    place-items: center;
    flex: none;
}
.narrow {
    width: 60px;
}
.app:nth-child(2) {
    width: 61px;
    margin-right: 2px;
}
.open {
    background: linear-gradient(#76b9ed, #76b9ed) center bottom / 52px 3px no-repeat;
}
.multi {
    background: linear-gradient(90deg, #76b9ed 41px, #5788af 41px) 6px bottom / 51px 3px no-repeat;
}
.badge {
    font-size: 15px;
    fill: #fff;
}
.amazon {
    font-size: 7.300px;
    font-weight: 700;
}
.word-w {
    font-size: 12px;
    font-weight: 700;
    fill: #fff;
}
.tray {
    display: grid;
    grid-template-columns: 39px 58px 31px 27px 30px 33px 27px 30px 33px 37px 99px 44px 1px;
    align-items: center;
    font-size: 14px;
    white-space: nowrap;
}
.temp {
    font-size: 16.500px;
}
.clock {
    width: 84px;
    text-align: center;
    line-height: 22.500px;
}
.peek {
    height: 50px;
    width: 1px;
    background: #777;
}
```
